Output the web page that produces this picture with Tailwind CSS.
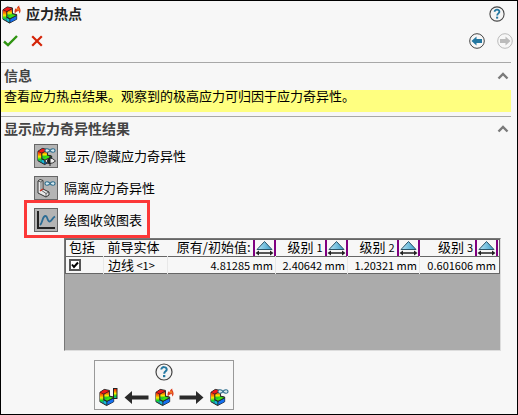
<!DOCTYPE html>
<html lang="zh-CN">
<head>
  <meta charset="UTF-8">
  <meta name="viewport" content="width=device-width, initial-scale=1.0">
  <title>应力热点</title>
  <script src="https://cdn.jsdelivr.net/npm/@tailwindcss/browser@4"></script>
</head>
<body class="min-h-screen flex flex-col bg-[#f7f7f7] border border-black text-black text-[13px] leading-4 font-['Noto_Sans_CJK_SC',sans-serif]">

  <!-- Shared icons -->
  <svg class="absolute w-0 h-0" aria-hidden="true">
    <defs>
      <linearGradient id="rainbow" x1="0" y1="0" x2="0" y2="1">
        <stop offset="0" stop-color="#f01010" />
        <stop offset="0.3" stop-color="#ff8a00" />
        <stop offset="0.5" stop-color="#f4ee00" />
        <stop offset="0.75" stop-color="#18d020" />
        <stop offset="1" stop-color="#10a8e0" />
      </linearGradient>
      <linearGradient id="cone" x1="0" y1="0" x2="1" y2="0">
        <stop offset="0" stop-color="#b4e4f4" />
        <stop offset="1" stop-color="#3a9cc8" />
      </linearGradient>
    </defs>
    <symbol id="part" viewBox="0 0 19 19">
      <path d="M1 4L5.500 1L11 2V8L15.500 9V14L8 18L1 14Z" fill="#222" stroke="#222" stroke-linejoin="round" />
      <path d="M1 4.200L4.800 6V15.500L1 13.500Z" fill="url(#rainbow)" />
      <path d="M1.500 4L5.500 1.300L10.800 2.300L6.500 5.200L5 5.500Z" fill="#f01818" />
      <path d="M5.500 6L10.500 3V9L6 11.500L5.500 12Z" fill="url(#rainbow)" />
      <path d="M6 11.500L10.500 8.500L15.300 9.800L8.700 13.200Z" fill="#38e018" />
      <path d="M4.800 12.500L8.200 14V17.500L4.800 15.700Z" fill="#14b8d8" />
      <path d="M8.500 14L15.300 10.600V13.900L8.500 17.500Z" fill="#1470f0" />
      <path d="M5 6V12L8.300 13.500L15 10M8.300 13.500V17.500M5 6L10.500 3" fill="none" stroke="#222" stroke-width="0.700" />
    </symbol>
    <symbol id="flame" viewBox="0 0 8 9">
      <path d="M1 9C0 6 1 4 2 3L3 4.500C3 2.500 4 1 6 0C5.500 2 7.500 3 7.500 5.500C7.500 7 7 8 6 9C6 7 5.500 6 4.500 5.500C4 7 3 7.500 2.500 7C2 8 1.500 8.500 1 9Z" fill="#dc3c1c" />
      <path d="M3.500 5L4.500 3L6 5.500" fill="none" stroke="#ffb030" stroke-width="0.800" />
    </symbol>
    <symbol id="loops" viewBox="0 0 12 5">
      <path d="M6 2.500C5 0.500 1 -0.200 1 2.500S5 4.500 6 2.500S11 -0.200 11 2.500S7 4.500 6 2.500Z" fill="#d8eaf0" stroke="#2c6c8c" stroke-width="1.100" />
    </symbol>
    <symbol id="help" viewBox="0 0 18 18">
      <circle cx="9" cy="9" r="8" fill="#f4f4f4" stroke="#444" stroke-width="1.200" />
      <path d="M6.300 6.600C6.300 3.200 11.900 3.400 11.700 6.600C11.600 8.400 9.200 8.200 9.200 10.800" fill="none" stroke="#2477a0" stroke-width="2" />
      <rect x="8" y="12" width="2.300" height="2.200" fill="#2477a0" />
    </symbol>
    <symbol id="chevron" viewBox="0 0 12 8">
      <path d="M1.500 6.500L6 2L10.500 6.500" fill="none" stroke="#7a7a7a" stroke-width="2.400" />
    </symbol>
    <symbol id="sort" viewBox="0 0 19 15">
      <path d="M9.500 1L17 9H2Z" fill="url(#cone)" stroke="#2a5468" />
      <path d="M0.500 12.500L4 10V11.800H15V10L18.500 12.500L15 15V13.300H4V15Z" fill="#222" />
    </symbol>
    <symbol id="arrow" viewBox="0 0 25 13">
      <path d="M24.500 6.500L17 0V4.500H0.500V8.500H17V13Z" fill="#2a2a2a" />
    </symbol>
  </svg>

  <!-- Title bar -->
  <header>
    <div class="flex items-center h-[26px] pl-px pr-3">
      <div class="flex w-6">
        <svg class="w-[19px] h-[19px] shrink-0"><use href="#part" y="1" width="18" height="18" /><use href="#flame" x="12" y="0" width="7" height="9" /></svg>
      </div>
      <h1 class="pb-0.5 text-sm leading-4 font-bold text-[#222]">应力热点</h1>
      <button class="ml-auto" aria-label="帮助"><svg class="w-4 h-4"><use href="#help" /></svg></button>
    </div>
    <div class="flex items-center h-7 pl-0.5 pr-1">
      <button class="w-7" aria-label="确定">
        <svg class="w-[15px] h-3" viewBox="0 0 15 12"><path d="M1 6.500L5 10.200L14 1" fill="none" stroke="#2f9412" stroke-width="2.400" /></svg>
      </button>
      <button aria-label="取消">
        <svg class="w-3 h-3" viewBox="0 0 12 12"><path d="M1.200 1.200L10.800 10.800M10.800 1.200L1.200 10.800" fill="none" stroke="#d42408" stroke-width="2.200" /></svg>
      </button>
      <div class="ml-auto flex gap-3">
        <button aria-label="上一步">
          <svg class="w-4 h-4" viewBox="0 0 16 16"><circle cx="8" cy="8" r="7.300" fill="#f7f7f7" stroke="#444" /><path d="M2.500 8L7.500 3.500V6H13V10H7.500V12.500Z" fill="#2477a0" /></svg>
        </button>
        <button disabled aria-label="下一步">
          <svg class="w-4 h-4" viewBox="0 0 16 16"><circle cx="8" cy="8" r="7.300" fill="#f7f7f7" stroke="#bbb" /><path d="M13.500 8L8.500 3.500V6H3V10H8.500V12.500Z" fill="#bbb" /></svg>
        </button>
      </div>
    </div>
  </header>

  <main class="pt-[7px]">
    <!-- Message -->
    <section class="mr-1.5 border-t border-[#a8a8a8]">
      <div class="flex items-center justify-between h-[27px] pl-[3px] pr-0.5 pb-0.5">
        <h2 class="pb-0.5 text-sm leading-4 font-bold text-[#444]">信息</h2>
        <button aria-label="折叠信息"><svg class="w-3 h-2"><use href="#chevron" /></svg></button>
      </div>
      <p class="h-[22px] mb-1 pl-[3px] leading-3 bg-[#ffff80]">查看应力热点结果。观察到的极高应力可归因于应力奇异性。</p>
    </section>

    <!-- Singularity results -->
    <section>
      <div class="flex items-center justify-between h-[27px] mr-1.5 pl-[3px] pr-0.5 pb-0.5 border-t border-[#a8a8a8]">
        <h2 class="pb-0.5 text-sm leading-4 font-bold text-[#444]">显示应力奇异性结果</h2>
        <button aria-label="折叠结果"><svg class="w-3 h-2"><use href="#chevron" /></svg></button>
      </div>

      <div class="flex flex-col items-start gap-2 pl-[33px] pt-px pb-1.5">
        <button class="flex items-center gap-1.5">
          <span class="w-6 h-6 border border-[#666] bg-[#b4b4b4]">
            <svg class="w-[22px] h-[22px]" viewBox="0 0 22 22">
              <use href="#part" x="2" y="2" width="18" height="19" />
              <use href="#loops" x="9" y="3" width="12" height="5" />
              <path d="M9.500 16Q15 10 20.500 16Q15 21 9.500 16Z" fill="#eee" stroke="#333" />
              <path d="M15 13A3 3 0 0 0 15 19Z" fill="#222" /><path d="M15 10V21" stroke="#222" />
            </svg>
          </span>
          <span>显示/隐藏应力奇异性</span>
        </button>
        <button class="flex items-center gap-1.5">
          <span class="w-6 h-6 border border-[#666] bg-[#b4b4b4]">
            <svg class="w-[22px] h-[22px]" viewBox="0 0 22 22">
              <path d="M3 4L5 2.500L8 3.500V12L14 15V18L11 20L3 16Z" fill="#e8e8e8" stroke="#333" stroke-linejoin="round" />
              <path d="M3 4L6 5L8 3.500M6 5V13L11 16.500L14 15M11 16.500V20" fill="none" stroke="#444" stroke-width="0.800" />
              <path d="M5 14L8 12" stroke="#d03020" stroke-width="1.500" />
              <use href="#loops" x="9" y="4" width="12" height="5" />
            </svg>
          </span>
          <span>隔离应力奇异性</span>
        </button>
        <button class="relative flex items-center gap-1.5">
          <span class="w-6 h-6 border border-[#666] bg-[#b4b4b4]">
            <svg class="w-[22px] h-[22px]" viewBox="0 0 22 22">
              <path d="M3 2V19H20" fill="none" stroke="#222" stroke-width="2" />
              <path d="M5 16C8 14 7 7 10.500 7C13 7 12 13 15 12.500C17 12 17 9 20 7.500" fill="none" stroke="#2c6c94" stroke-width="1.800" />
            </svg>
          </span>
          <span>绘图收敛图表</span>
          <span class="absolute -left-2.5 -right-2 -top-2 -bottom-1.5 border-3 border-[#fc3838]"></span>
        </button>
      </div>

      <div class="ml-[63px] mr-4 h-[113px] bg-[#ababab] border-t border-l border-[#777] border-r border-r-[#ddd] border-b border-b-[#ddd]">
        <table class="w-full table-fixed border-collapse border border-[#666] bg-[#f7f7f7] whitespace-nowrap">
          <colgroup>
            <col class="w-[38px]"><col class="w-16"><col class="w-[108px]"><col class="w-[72px]"><col class="w-[72px]"><col>
          </colgroup>
          <thead>
            <tr class="h-[17px] border-b border-[#666] leading-[14px] align-top">
              <th class="p-0 pl-[3px] text-left font-normal">包括</th>
              <th class="p-0 pl-1 text-left font-normal">前导实体</th>
              <th class="p-0 font-normal"><div class="flex justify-end gap-0.5">原有/初始值:<span class="flex border-x-2 border-[#800080]"><svg class="w-[19px] h-4"><use href="#sort" /></svg></span></div></th>
              <th class="p-0 font-normal"><div class="flex justify-end gap-0.5"><span>级别 <span class="text-[11px]">1</span></span><span class="flex border-x-2 border-[#800080]"><svg class="w-[19px] h-4"><use href="#sort" /></svg></span></div></th>
              <th class="p-0 font-normal"><div class="flex justify-end gap-0.5"><span>级别 <span class="text-[11px]">2</span></span><span class="flex border-x-2 border-[#800080]"><svg class="w-[19px] h-4"><use href="#sort" /></svg></span></div></th>
              <th class="p-0 pr-px font-normal"><div class="flex justify-end gap-0.5"><span>级别 <span class="text-[11px]">3</span></span><span class="flex border-x-2 border-[#800080]"><svg class="w-[19px] h-4"><use href="#sort" /></svg></span></div></th>
            </tr>
          </thead>
          <tbody>
            <tr class="h-4 leading-4 text-right text-[11px]">
              <td class="p-0 pl-[3px] border-r border-[#e8e8e8]">
                <label class="relative block w-3 h-3">
                  <input type="checkbox" checked aria-label="包括 边线 1" class="block appearance-none w-3 h-3 bg-white border-2 border-[#555]">
                  <svg class="absolute inset-0 w-3 h-3" viewBox="0 0 12 12"><path d="M3 5.500L5 8L9 3.500" fill="none" stroke="#000" stroke-width="2" /></svg>
                </label>
              </td>
              <td class="p-0 pl-1 text-left border-r border-[#e8e8e8]"><span class="text-[13px]">边线</span> &lt;1&gt;</td>
              <td class="p-0 pr-0.5 border-r border-[#e8e8e8]">4.81285 mm</td>
              <td class="p-0 pr-0.5 border-r border-[#e8e8e8]">2.40642 mm</td>
              <td class="p-0 pr-0.5 border-r border-[#e8e8e8]">1.20321 mm</td>
              <td class="p-0 pr-[3px]">0.601606 mm</td>
            </tr>
          </tbody>
        </table>
      </div>
    </section>

    <!-- Step navigation -->
    <nav class="flex flex-col items-center justify-between ml-[93px] mt-[9px] w-[140px] h-[50px] px-1 pt-0.5 pb-0.5 border border-[#999]">
      <button aria-label="帮助"><svg class="w-[18px] h-[18px]"><use href="#help" /></svg></button>
      <div class="flex items-center justify-between w-full">
        <button aria-label="应力图解"><svg class="w-[19px] h-[19px]"><use href="#part" width="18" height="19" /><rect x="14.500" y="0.500" width="3.500" height="10" fill="url(#rainbow)" stroke="#222" /></svg></button>
        <svg class="w-[25px] h-[13px] rotate-180"><use href="#arrow" /></svg>
        <button aria-label="应力热点"><svg class="w-[19px] h-[19px]"><use href="#part" width="18" height="19" /><use href="#flame" x="12" y="0" width="7" height="9" /></svg></button>
        <svg class="w-[25px] h-[13px]"><use href="#arrow" /></svg>
        <button aria-label="应力奇异性"><svg class="w-[19px] h-[19px]"><use href="#part" width="18" height="19" /><use href="#loops" x="7" y="1" width="12" height="5" /></svg></button>
      </div>
    </nav>
  </main>
</body>
</html>
